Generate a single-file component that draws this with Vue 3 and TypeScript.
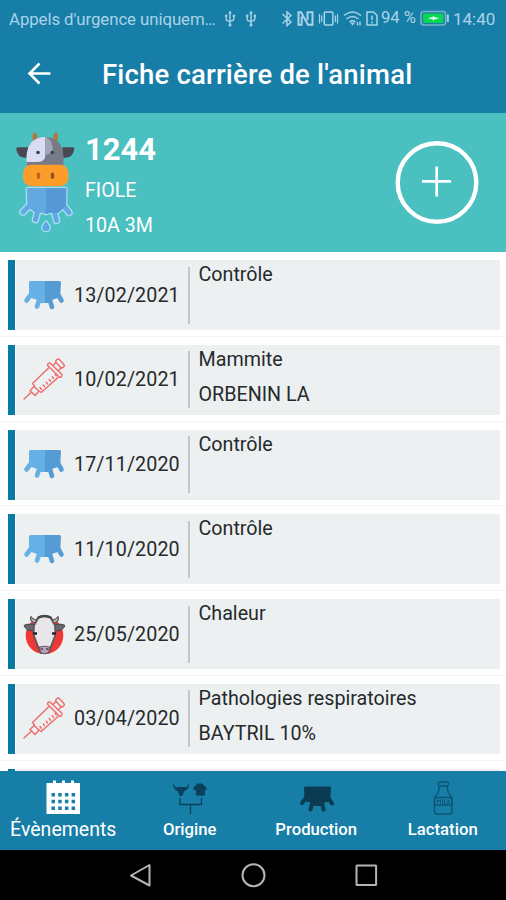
<script setup lang="ts">
type EventKind = 'udder' | 'syringe' | 'heat'

interface CareerEvent {
  date: string
  kind: EventKind
  title: string
  detail?: string
}

const events: CareerEvent[] = [
  { date: '13/02/2021', kind: 'udder', title: 'Contrôle' },
  { date: '10/02/2021', kind: 'syringe', title: 'Mammite', detail: 'ORBENIN LA' },
  { date: '17/11/2020', kind: 'udder', title: 'Contrôle' },
  { date: '11/10/2020', kind: 'udder', title: 'Contrôle' },
  { date: '25/05/2020', kind: 'heat', title: 'Chaleur' },
  { date: '03/04/2020', kind: 'syringe', title: 'Pathologies respiratoires', detail: 'BAYTRIL 10%' },
]
</script>

<template>
  <div class="screen">
    <div class="status">
      <span class="carrier">Appels d'urgence uniquem…</span>
      <svg class="usb" viewBox="0 0 36 18" width="36" height="18" fill="none" stroke="#a9d3e8" stroke-width="1.4">
        <g id="usb-mark">
          <path d="M6 2v13M2.200 6v3.200q0 1.800 3.800 2.200M9.800 6v3q0 1.800-3.800 2.200" />
          <path d="M6 .5l1.900 3H4.100zM1 4.800h2.400v2H1zM8.700 4.800h2.400v2H8.700z" fill="#a9d3e8" stroke="none" />
          <circle cx="6" cy="15" r="1.500" fill="#a9d3e8" stroke="none" />
        </g>
        <use href="#usb-mark" x="21" />
      </svg>
      <svg class="radios" viewBox="281 8 98 20" width="98" height="20" fill="none" stroke="#a9d3e8" stroke-width="1.500">
        <path d="M282.500 13l8.500 8-4 3.500V11l4 3.500-8.500 8" />
        <path d="M302.500 23.800h-4V11.200h2.500l7 12.600h4.500V11.200h-5v8M301.700 23.500v-8" stroke-width="2" />
        <rect x="324.300" y="11" width="8.600" height="13" rx="1" />
        <path d="M319.500 13v9.500M321.700 14.500v6.500M335.400 14.500v6.500M337.500 13v9.500" stroke-width="1.200" />
        <path d="M344 14.500q8.500-7 17 0M346.500 18q6-5 12 0M349.500 21q3-2.500 6 0" />
        <path d="M350 21.500h5l-2.500 3z" fill="#a9d3e8" stroke="none" />
        <path d="M357.500 24.500v-3.500M360 20.500v4" stroke-width="1.400" />
        <path d="M367 11h6.500l3.500 3.500v9.500H367z" />
        <path d="M372 14.500v4.500M372 20.500v2" />
      </svg>
      <span class="percent">94 %</span>
      <svg class="battery" viewBox="0 0 30 17" width="30" height="17">
        <rect x="1" y="1.500" width="24.500" height="13.500" rx="2.500" fill="none" stroke="#79b2cb" stroke-width="1.500" />
        <rect x="3" y="3.500" width="20.500" height="9.500" fill="#09d456" />
        <path d="M8 8.200l5-1.400V5.500l1.500 1.400 5 1.300-5 1.300-1.500 1.600V9.600z" fill="#d8ffe4" />
        <path d="M27.800 4.500v7.500" stroke="#a9d3e8" stroke-width="2" />
      </svg>
      <span class="clock">14:40</span>
    </div>

    <header class="titlebar">
      <svg class="back" viewBox="0 0 24 24" width="24" height="24" fill="none" stroke="#fff" stroke-width="2.600">
        <path d="M23.500 12.500H2.500M12.500 2.500L2.500 12.500l10 10" />
      </svg>
      <h1>Fiche carrière de l'animal</h1>
    </header>

    <section class="animal">
      <svg class="cow" viewBox="14 130 62 106" width="62" height="106">
        <path d="M33.300 141q-1.500-4 0-8.300h2.500q1.800 3 1.700 7zM57.200 141q1.500-4 0-8.300h-2.500q-1.800 3-1.700 7z" fill="#b97438" />
        <path d="M28 147.300h-10q-2.500 0-1.500 3 1.500 7 8 7.500h3.500zM62.500 147.300h10q2.500 0 1.500 3-1.500 7-8 7.500h-3.500z" fill="#474853" />
        <path d="M26.500 167v-11Q28 137 45.500 137v30z" fill="#d9dcf2" />
        <path d="M45.500 137Q62 137.500 63.500 156v11h-37v-5H38q7 0 7.500-7z" fill="#777b88" />
        <path d="M45.500 137q5.500 2 7 9 2 7-7 9z" fill="#a2a7b7" />
        <circle cx="38" cy="152.500" r="1.800" fill="#3f4052" />
        <circle cx="52.300" cy="152.500" r="1.800" fill="#3f4052" />
        <rect x="23" y="164.800" width="45.500" height="21.500" rx="8.500" fill="#fc9d2a" />
        <ellipse cx="38.500" cy="175.700" rx="1.800" ry="3.300" fill="#b96525" />
        <ellipse cx="52.500" cy="175.700" rx="1.800" ry="3.300" fill="#914e26" />
        <g fill="none" stroke-linecap="round" stroke-linejoin="round">
          <g stroke="#a9def3">
            <path d="M29 206l-6 6M38 210l-2.500 9.500M54 210l2.500 10.500M64 206l5 6.500" stroke-width="7.600" />
            <path d="M28 189.200h37.300l-.4 16.800-7.500 6-7-.5-4.400 1.500-4.300-1.500-5.200.5-8-6z" stroke-width="4.800" />
          </g>
          <g stroke="#62a9e1">
            <path d="M29 206l-6 6M38 210l-2.500 9.500M54 210l2.500 10.500M64 206l5 6.500" stroke-width="5" />
            <path d="M28 189.200h37.300l-.4 16.800-7.500 6-7-.5-4.400 1.500-4.300-1.500-5.200.5-8-6z" stroke-width="2.200" fill="#62a9e1" />
          </g>
        </g>
        <path d="M46 188.100h19.300q1.100 0 1.100 1.100l-.4 16.800-8 7-7-.5-5 1.600z" fill="#5699d6" />
        <path d="M46 220.500q-4.700 5-4.300 7.500.7 3.700 4.300 3.700t4.300-3.700q.400-2.500-4.300-7.500z" fill="#5ba8e3" stroke="#a9def3" stroke-width="1.200" />
      </svg>
      <div class="identity">
        <strong>1244</strong>
        <span>FIOLE</span>
        <span class="age">10A 3M</span>
      </div>
      <button class="add" type="button">
        <svg viewBox="0 0 84 84" width="84" height="84" fill="none" stroke="#fff">
          <circle cx="42" cy="42.500" r="39.300" stroke-width="4.400" />
          <path d="M27 41.300h29M41.700 26.500v30" stroke-width="2.700" />
        </svg>
      </button>
    </section>

    <main class="events">
      <div v-for="event in events" :key="event.date" class="slot">
        <article class="event">
          <svg v-if="event.kind === 'udder'" class="icon" viewBox="0 0 42 42" width="42" height="42">
            <g stroke-linecap="round" stroke-width="4.600">
              <path d="M8 20.500L3.500 26.500M16.500 25L14 32.500" stroke="#65b1e6" />
              <path d="M26.500 25l2.500 8M35 20.500l3.500 6" stroke="#559bd5" />
            </g>
            <path d="M6 8.500Q6 7 7.500 7H22v22h-5.500L13 25.500l-5-1.500-2-3.500z" fill="#65b1e6" />
            <path d="M22 7h14.500Q38 7 38 8.500l-.7 12-2.300 3.500-5 1.500-3 3.500h-5z" fill="#559bd5" />
          </svg>
          <svg v-else-if="event.kind === 'syringe'" class="icon" viewBox="0 0 42 42" width="42" height="42" fill="none" stroke="#f06a6a" stroke-width="1.400" stroke-linejoin="round" stroke-linecap="round">
            <path d="M1 41l7-6.500M7 32.500l5 5M7.500 32L11 28.500l5 4.500-3.500 4M11.500 28l-2-2.500 16-15.500M16 33l2.200 1.500L35 19.500" />
            <path d="M24.500 7.300q0-2.500 2.500-2.300L39 16.500q0 3-2.500 2.800zM30 7.500l3-3M35.500 12.500l3-3" />
            <rect x="-5" y="-2.200" width="10" height="4.400" rx="2" transform="translate(37 5.500) rotate(47)" />
            <path d="M18.500 31.500l-1.500-2M21.500 28.700l-1.200-1.700M24.500 26l-1.300-1.800M27.500 23.200l-1.300-1.700M30.500 20.500l-1.300-1.800M33.200 17.900l-1-1.400" />
          </svg>
          <svg v-else class="icon" viewBox="0 0 42 42" width="42" height="42" stroke-linejoin="round">
            <circle cx="21.500" cy="22.500" r="18.800" fill="#ef3835" />
            <path d="M12 10Q6 8 8 3.500q1.500 3.500 8 4M31 10q6-2 4-6.500-1.500 3.500-8 4" fill="#c9c4c7" stroke="#5d5a5f" stroke-width="1.200" />
            <path d="M13.500 12Q5 10 1 12.500q2.500 6.500 11 5zM29.500 12q8.500-2 12.500.5-2.500 6.500-11 5z" fill="#6b686e" stroke="#454348" stroke-width="1" />
            <path d="M15.500 4.500q6-3 12 0l4.500 8 .5 9-4.500 12-3 6.500h-7l-3-6.500-4.500-12 .5-9z" fill="#e9e6ea" stroke="#5a575d" stroke-width="1.800" />
            <path d="M14.500 5q7-4 14 0" fill="none" stroke="#49464b" stroke-width="2.400" />
            <path d="M10 20.500h4M33 20.500h-4" stroke="#252327" stroke-width="2.600" />
            <path d="M16.500 34q5-1.500 10 0l-1 5.500q-4 2-8 0z" fill="#bba3b7" stroke="#6c5b72" stroke-width="1.200" />
            <path d="M18 36h2M23 36h2" stroke="#503e5d" stroke-width="1.500" />
          </svg>
          <time>{{ event.date }}</time>
          <div class="text">
            <p>{{ event.title }}</p>
            <p v-if="event.detail">{{ event.detail }}</p>
          </div>
        </article>
      </div>
      <div class="slot"><article class="event"></article></div>
    </main>

    <nav class="tabs">
      <a class="tab active">
        <svg viewBox="0 0 36 36" width="36" height="36">
          <path d="M1.500 4h6.500V1.500h3V4h6V1.500h3V4h6V1.500h3V4h6V35H1.500z" fill="#fff" />
          <path d="M6.500 15.800h24M6.500 22.500h24M6.500 29.200h24" stroke="#177ea7" stroke-width="3.500" stroke-dasharray="3.500 3.200" />
        </svg>
        <span>Évènements</span>
      </a>
      <a class="tab">
        <svg viewBox="0 0 36 36" width="36" height="36" fill="#0b4059">
          <path d="M1.500 4.500q1 4.500 4.500 3.500h6q3.500 1 4.500-3.500l.5 1q-.5 4.500-3.500 6l-1.500 1-1.500 4-1.500.8-1.500-.8-1.500-4-1.500-1Q1.500 10 1 5.500z" />
          <path d="M22 8l3.500-3.500h4.500L34 8l1 2-2 1.500v5h-2l-2.500.3-2.500-.3h-2v-5L21 10z" />
          <path d="M8 19v6.500h21.500V19M18.500 25.500V35" fill="none" stroke="#0b4059" stroke-width="1.300" />
        </svg>
        <span>Origine</span>
      </a>
      <a class="tab">
        <svg viewBox="0 0 36 36" width="36" height="36" fill="#0b3b51">
          <path d="M7.500 19.500L4 24M14.500 23l-2 7.500M24 23l1.500 7.500M30.500 19.500L34 24.500" stroke="#0b3b51" stroke-width="4" stroke-linecap="round" />
          <path d="M6 9q0-1.500 1.500-1.500h24Q33 7.500 33 9l-.7 11-2.500 3-3.500.5-2 3.500h-8.500l-2-3.500-4.500-.5-2.800-3z" />
        </svg>
        <span>Production</span>
      </a>
      <a class="tab">
        <svg viewBox="0 0 36 36" width="36" height="36" fill="none" stroke="#0d5673" stroke-width="1.400">
          <rect x="13.300" y="3" width="10" height="4" rx="1" />
          <path d="M14 7v3q0 3-2.500 6-2 2-2 5v11.500q0 2.500 2.500 2.500h12.500q2.500 0 2.500-2.500V21q0-3-2-5-2.500-3-2.500-6V7" />
          <path d="M9.500 18.500H27v7.500H9.500z" />
          <path d="M12.500 24.500v-4l1.500 2 1.500-2v4M17.500 20.500v4M19.500 20.500v4h2M23 20.500v4M25 20.500l-2 2 2 2" stroke-width="1" />
        </svg>
        <span>Lactation</span>
      </a>
    </nav>

    <div class="system">
      <svg viewBox="0 0 28 28" width="28" height="28"><path d="M23.500 3v20.500L5 13.500z" /></svg>
      <svg viewBox="0 0 28 28" width="28" height="28"><circle cx="14.500" cy="13.300" r="11" /></svg>
      <svg viewBox="0 0 28 28" width="28" height="28"><rect x="4.500" y="3.500" width="19.600" height="19.600" rx=".5" /></svg>
    </div>
  </div>
</template>

<style>
body {
  margin: 0;
}
</style>

<style scoped>
.screen {
  width: 506px;
  height: 900px;
  overflow: hidden;
  display: flex;
  flex-direction: column;
  background: #fff;
  font-family: Roboto, "Liberation Sans", sans-serif;
}
.screen > * {
  flex-shrink: 0;
  box-sizing: border-box;
}
svg {
  display: block;
  flex-shrink: 0;
}
.status {
  height: 37px;
  padding-left: 9px;
  display: flex;
  align-items: center;
  background: #177ea7;
  color: #a9d3e8;
  font-size: 17px;
  line-height: 20px;
  white-space: nowrap;
}
.carrier {
  width: 215px;
  font-size: 16.8px;
  letter-spacing: -0.07px;
}
.usb {
  width: 36px;
  margin-right: 21px;
}
.percent {
  width: 39px;
  margin-left: 2px;
  margin-top: -2px;
  font-size: 16.6px;
}
.clock {
  margin-left: 3px;
}
.titlebar {
  height: 76px;
  padding: 0 27px;
  display: flex;
  align-items: center;
  gap: 51px;
  background: #177ea7;
  color: #fff;
}
.back {
  margin-top: -4px;
}
h1 {
  margin: 0;
  font-size: 27.5px;
  line-height: 32px;
  font-weight: 500;
  letter-spacing: 0.18px;
  white-space: nowrap;
}
.animal {
  height: 139px;
  padding: 17px 27px 0 14px;
  display: flex;
  align-items: flex-start;
  background: #4ac0c0;
  color: #fff;
}
.identity {
  display: flex;
  flex-direction: column;
  flex: 1;
  margin-left: 9px;
  font-size: 19.6px;
  line-height: 36px;
}
.identity strong {
  font-size: 31px;
  line-height: 39px;
  margin-bottom: 4px;
}
.identity .age {
  line-height: 34px;
}
.add {
  width: 84px;
  height: 84px;
  margin-top: 10px;
  padding: 0;
  border: 0;
  background: none;
}
.events {
  height: 519px;
  overflow: hidden;
}
.slot {
  height: 84.75px;
  padding: 8px 6px 0 8px;
  box-sizing: border-box;
  border-bottom: 1px solid #f3f5f6;
}
.event {
  height: 70px;
  box-sizing: border-box;
  border-left: 7px solid #087ba4;
  padding-left: 8px;
  display: flex;
  align-items: center;
  background: linear-gradient(to right, #fff 1px, #ecf0f0 1px);
  color: #262a2c;
  font-size: 19.7px;
}
.icon {
  margin-top: -1px;
}
time {
  width: 122px;
  padding-left: 9px;
  box-sizing: border-box;
  letter-spacing: 0.1px;
  white-space: nowrap;
}
.text {
  height: 57px;
  border-left: 2px solid #c3c7c8;
  padding-left: 9px;
  box-sizing: border-box;
  margin-left: 1px;
}
.text p {
  margin: 0 0 0 -0.5px;
  line-height: 35px;
  position: relative;
  top: -9.5px;
}
.tabs {
  height: 79px;
  display: grid;
  grid-template-columns: repeat(4, 1fr);
  background: #177ea7;
  color: #fff;
}
.tab {
  display: flex;
  flex-direction: column;
  align-items: center;
  padding-top: 8px;
  font-size: 16.7px;
  line-height: 30px;
  font-weight: 500;
}
.active {
  font-size: 19.5px;
  font-weight: 400;
}
.system {
  height: 50px;
  padding: 12px 126px 0;
  display: flex;
  justify-content: space-between;
  background: #000;
}
.system svg {
  fill: none;
  stroke: #b5b5b5;
  stroke-width: 2;
  stroke-linejoin: round;
}
</style>
